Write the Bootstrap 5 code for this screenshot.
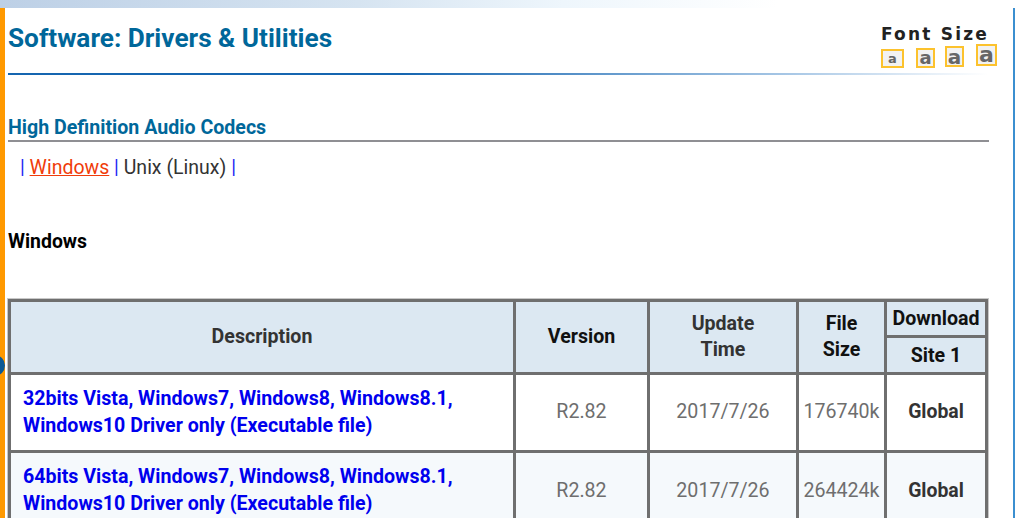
<!DOCTYPE html>
<html lang="en">
<head>
<meta charset="utf-8">
<title>Drivers</title>
<link href="https://cdn.jsdelivr.net/npm/bootstrap@5.3.0/dist/css/bootstrap.min.css" rel="stylesheet">
<style>
html,body{height:518px;overflow:hidden;background:#fff}
body{font-family:Roboto,"Liberation Sans",sans-serif;color:#333;position:relative}
.topband{height:8px;background:linear-gradient(90deg,#bdd0e6 0%,#d6e4f1 35%,#eef6fc 55%,#fff 76%)}
.shell{width:1015px;height:510px;border-left:5px solid #f90;border-right:2px solid #3b8fd0;padding-left:3px;padding-right:25px}
.ball{position:absolute;left:-21px;top:347px;width:21px;height:21px;border-radius:50%;background:#0b5a96}
.headrow{height:67px;border-bottom:2px solid;border-image:linear-gradient(90deg,#1565b0 0%,#1565b0 40%,#a9c8e6 80%,#fff 100%) 1;width:979px}
.pagetitle{font-size:26.2px;font-weight:700;color:#00679a;line-height:30px;margin:15px 0 0}
.fontbox{width:118px;margin-top:17px;margin-right:-11px}
.fontlabel{font-family:"DejaVu Sans",sans-serif;font-weight:700;font-size:17px;line-height:16px;color:#222;letter-spacing:2.2px;white-space:nowrap;padding-left:1px;margin-top:1px}
.sizes{height:26px}
.szbtn{display:flex;align-items:center;justify-content:center;border:2px solid #fcc22d;background:#f2f2f2;color:#666;font-family:"DejaVu Sans",sans-serif;font-weight:700;line-height:14px}
.sz1{width:23px;height:19px;font-size:13px;margin-left:1px}.sz2{width:19px;height:20px;font-size:18px;margin-left:12px}.sz3{width:19px;height:21px;font-size:20px;margin-left:10px;margin-bottom:1px}.sz4{width:21px;height:22px;font-size:22px;margin-left:12px;margin-bottom:2px}
.subtitle{font-size:19.6px;font-weight:700;color:#00679a;line-height:24px;margin:41px 0 0;border-bottom:2px solid #8f8f93;padding-bottom:0;width:981px;height:26px}
.tabs{font-size:19.5px;line-height:24px;margin:14px 0 0 12px;color:#333}
.tabs i{font-style:normal;color:#2222f5}
.tabs a{color:#f03c0a}
.oshead{font-size:19.4px;font-weight:700;color:#000;line-height:24px;margin:50px 0 0}
.dtable{width:980px;table-layout:fixed;border-collapse:collapse;margin-top:45px;outline:1px solid #c8c8c8}
.dtable th,.dtable td{border:3px solid #6f6f6f;text-align:center;vertical-align:middle;padding:0;overflow:hidden;white-space:nowrap}
.dtable th{background:#dce8f2;font-size:19.6px;font-weight:700;line-height:26.5px;color:#333}
.dtable td{font-size:19.6px;line-height:27px;color:#6e6e6e;height:78px;padding-bottom:2px}
.dtable tr.alt td{background:#f5f9fc;padding-bottom:0}
.dtable tr.alt td.desc{padding-bottom:2px}
.dtable td.desc{text-align:left;padding-left:12px;font-weight:700;font-size:19.6px}
.dtable td.desc a{color:#0000ee;text-decoration:none}
.dtable td.site{font-weight:700;color:#333;font-size:19.4px}
.dtable th.blk{color:#111}
.dtable th.dl{padding-top:1px}
.dtable th.st{padding-top:2px}
.r1{height:36px}.r2{height:37px}
</style>
</head>
<body>
<div class="topband"></div>
<div class="shell position-relative">
  <div class="ball"></div>
  <div class="headrow d-flex justify-content-between">
    <h1 class="pagetitle">Software: Drivers &amp; Utilities</h1>
    <div class="fontbox">
      <div class="fontlabel">Font Size</div>
      <div class="sizes d-flex align-items-end">
        <span class="szbtn sz1">a</span><span class="szbtn sz2">a</span><span class="szbtn sz3">a</span><span class="szbtn sz4">a</span>
      </div>
    </div>
  </div>
  <h2 class="subtitle">High Definition Audio Codecs</h2>
  <p class="tabs"><i>|</i> <a href="#">Windows</a> <i>|</i> Unix (Linux) <i>|</i></p>
  <p class="oshead">Windows</p>
  <table class="dtable">
    <colgroup><col style="width:505px"><col style="width:134px"><col style="width:149px"><col style="width:88px"><col></colgroup>
    <tr class="r1"><th rowspan="2">Description</th><th rowspan="2" class="blk">Version</th><th rowspan="2">Update<br>Time</th><th rowspan="2" class="blk">File<br>Size</th><th class="blk dl">Download</th></tr>
    <tr class="r2"><th class="blk st">Site 1</th></tr>
    <tr><td class="desc"><a href="#">32bits Vista, Windows7, Windows8, Windows8.1,<br>Windows10 Driver only (Executable file)</a></td><td>R2.82</td><td>2017/7/26</td><td>176740k</td><td class="site">Global</td></tr>
    <tr class="alt"><td class="desc"><a href="#">64bits Vista, Windows7, Windows8, Windows8.1,<br>Windows10 Driver only (Executable file)</a></td><td>R2.82</td><td>2017/7/26</td><td>264424k</td><td class="site">Global</td></tr>
  </table>
</div>
</body>
</html>
